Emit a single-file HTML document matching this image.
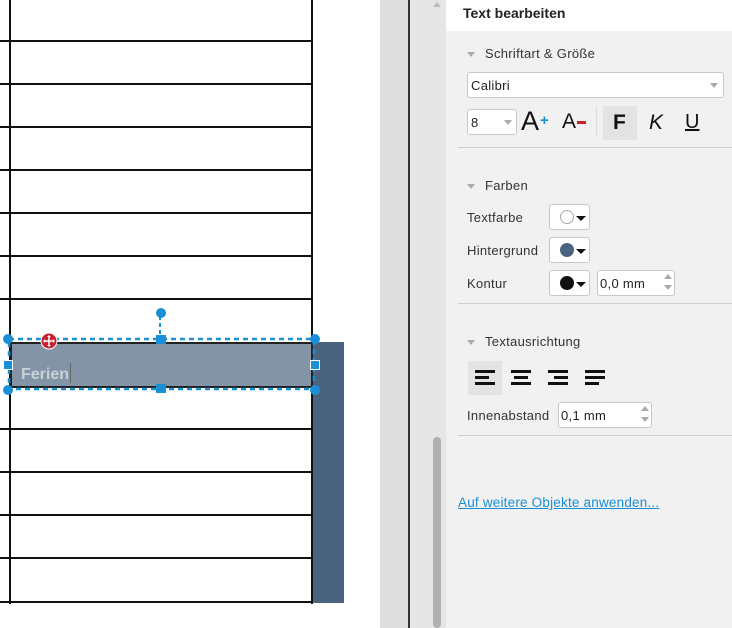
<!DOCTYPE html>
<html><head><meta charset="utf-8"><style>
*{margin:0;padding:0;box-sizing:border-box}
body{width:732px;height:628px;overflow:hidden;background:#fff;position:relative;font-family:"Liberation Sans","DejaVu Sans",sans-serif;font-size:13px;color:#222}
.a{position:absolute}
.h{position:absolute;left:0;width:313px;height:2px;background:#111}
.lbl{position:absolute;font-size:13px;color:#333;letter-spacing:0.3px}
.box{position:absolute;background:#fff;border:1px solid #c8c8c8;border-radius:3px}
.tri{position:absolute;width:0;height:0;border-left:4px solid transparent;border-right:4px solid transparent;border-top:5px solid #aaa}
.sep{position:absolute;left:458px;width:274px;height:1px;background:#cfcfcf}
.bar{position:absolute;height:3px;background:#111}
</style></head><body>
<!-- canvas -->
<div class="a" style="left:9px;top:0;width:2px;height:604px;background:#111"></div>
<div class="a" style="left:311px;top:0;width:2px;height:604px;background:#111"></div>
<div class="h" style="top:40px"></div><div class="h" style="top:83px"></div><div class="h" style="top:126px"></div><div class="h" style="top:169px"></div><div class="h" style="top:212px"></div><div class="h" style="top:255px"></div><div class="h" style="top:298px"></div>
<div class="h" style="top:428px"></div><div class="h" style="top:471px"></div><div class="h" style="top:514px"></div><div class="h" style="top:557px"></div><div class="h" style="top:601px"></div>
<div class="a" style="left:313px;top:342px;width:31px;height:261px;background:#4a6480"></div>
<div class="a" style="left:10px;top:342px;width:303px;height:46px;background:#8294a6;border:2px solid #222"></div>
<div class="a" style="left:21px;top:366px;font-weight:bold;font-size:16px;color:#c9d1d9">Ferien</div>
<div class="a" style="left:70px;top:363px;width:1px;height:20px;background:#666"></div>
<!-- selection -->
<svg class="a" style="left:0;top:300px" width="330" height="100">
<rect x="9" y="39" width="305" height="50" fill="none" stroke="#1a8fd6" stroke-width="2.5" stroke-dasharray="5,4"/>
<line x1="160" y1="16" x2="160" y2="38" stroke="#1a8fd6" stroke-width="2" stroke-dasharray="4,3"/>
</svg>
<div class="a" style="left:156px;top:308px;width:10px;height:10px;border-radius:50%;background:#1a8fd6"></div>
<div class="a" style="left:3px;top:334px;width:10px;height:10px;border-radius:50%;background:#1a8fd6"></div>
<div class="a" style="left:310px;top:334px;width:10px;height:10px;border-radius:50%;background:#1a8fd6"></div>
<div class="a" style="left:3px;top:385px;width:10px;height:10px;border-radius:50%;background:#1a8fd6"></div>
<div class="a" style="left:310px;top:385px;width:10px;height:10px;border-radius:50%;background:#1a8fd6"></div>
<div class="a" style="left:156px;top:335px;width:10px;height:9px;background:#1a8fd6"></div>
<div class="a" style="left:156px;top:384px;width:10px;height:9px;background:#1a8fd6"></div>
<div class="a" style="left:3px;top:360px;width:10px;height:10px;background:#1a8fd6;border:1px solid #fff"></div>
<div class="a" style="left:310px;top:360px;width:10px;height:10px;background:#1a8fd6;border:1px solid #fff"></div>
<svg class="a" style="left:40px;top:332px" width="18" height="18" viewBox="0 0 18 18"><circle cx="9" cy="9" r="8" fill="#c8202a" stroke="#fff" stroke-width="1"/><path d="M9 4v10M4 9h10" stroke="#fff" stroke-width="1.5"/><path d="M9 3l-2 2h4zM9 15l-2-2h4zM3 9l2-2v4zM15 9l-2-2v4z" fill="#fff"/></svg>
<!-- middle gutter -->
<div class="a" style="left:380px;top:0;width:29px;height:628px;background:#dedede"></div>
<div class="a" style="left:408px;top:0;width:2px;height:628px;background:#333"></div>
<div class="a" style="left:410px;top:0;width:36px;height:628px;background:#e6e6e6"></div>
<div class="a" style="left:433px;top:437px;width:8px;height:191px;border-radius:4px;background:#b0b0b0"></div>
<div class="a" style="left:433px;top:2px;width:0;height:0;border-left:4px solid transparent;border-right:4px solid transparent;border-bottom:5px solid #bbb"></div>
<!-- panel -->
<div class="a" style="left:446px;top:0;width:286px;height:628px;background:#f1f1f1"></div>
<div class="a" style="left:446px;top:0;width:286px;height:31px;background:#fff"></div>
<div class="a" style="left:463px;top:5px;font-weight:bold;font-size:14px;color:#222">Text bearbeiten</div>
<div class="tri" style="left:467px;top:52px"></div>
<div class="lbl" style="left:485px;top:46px">Schriftart &amp; Größe</div>
<div class="box" style="left:467px;top:72px;width:257px;height:26px"></div>
<div class="lbl" style="left:471px;top:78px;color:#222">Calibri</div>
<div class="tri" style="left:710px;top:83px"></div>
<div class="box" style="left:467px;top:109px;width:50px;height:26px"></div>
<div class="lbl" style="left:471px;top:115px;color:#222">8</div>
<div class="tri" style="left:504px;top:120px"></div>
<div class="a" style="left:521px;top:106px;font-size:27px;color:#111">A</div>
<div class="a" style="left:540px;top:112px;font-size:15px;font-weight:bold;color:#1a8fd6">+</div>
<div class="a" style="left:562px;top:110px;font-size:21px;color:#111">A</div>
<div class="a" style="left:577px;top:121px;width:9px;height:3px;background:#c8202a"></div>
<div class="a" style="left:596px;top:107px;width:1px;height:30px;background:#ddd"></div>
<div class="a" style="left:603px;top:106px;width:34px;height:34px;background:#e3e3e3"></div>
<div class="a" style="left:613px;top:111px;font-size:21px;font-weight:bold;color:#111">F</div>
<div class="a" style="left:649px;top:111px;font-size:21px;font-style:italic;color:#111">K</div>
<div class="a" style="left:685px;top:111px;font-size:20px;color:#111;text-decoration:underline">U</div>
<div class="sep" style="top:147px"></div>
<div class="tri" style="left:467px;top:184px"></div>
<div class="lbl" style="left:485px;top:178px">Farben</div>
<div class="lbl" style="left:467px;top:210px">Textfarbe</div>
<div class="box" style="left:549px;top:204px;width:41px;height:26px"></div>
<div class="a" style="left:560px;top:210px;width:14px;height:14px;border-radius:50%;border:1px solid #aaa;background:#fff"></div>
<div class="a" style="left:576px;top:216px;border-left:5px solid transparent;border-right:5px solid transparent;border-top:5px solid #111"></div>
<div class="lbl" style="left:467px;top:243px">Hintergrund</div>
<div class="box" style="left:549px;top:237px;width:41px;height:26px"></div>
<div class="a" style="left:560px;top:243px;width:14px;height:14px;border-radius:50%;background:#4a6480"></div>
<div class="a" style="left:576px;top:249px;border-left:5px solid transparent;border-right:5px solid transparent;border-top:5px solid #111"></div>
<div class="lbl" style="left:467px;top:276px">Kontur</div>
<div class="box" style="left:549px;top:270px;width:41px;height:26px"></div>
<div class="a" style="left:560px;top:276px;width:14px;height:14px;border-radius:50%;background:#111"></div>
<div class="a" style="left:576px;top:282px;border-left:5px solid transparent;border-right:5px solid transparent;border-top:5px solid #111"></div>
<div class="box" style="left:597px;top:270px;width:78px;height:26px"></div>
<div class="lbl" style="left:600px;top:276px;color:#222">0,0 mm</div>
<div class="a" style="left:664px;top:274px;border-left:4px solid transparent;border-right:4px solid transparent;border-bottom:5px solid #aaa"></div>
<div class="a" style="left:664px;top:285px;border-left:4px solid transparent;border-right:4px solid transparent;border-top:5px solid #aaa"></div>
<div class="sep" style="top:303px"></div>
<div class="tri" style="left:467px;top:340px"></div>
<div class="lbl" style="left:485px;top:334px">Textausrichtung</div>
<div class="a" style="left:468px;top:361px;width:34px;height:34px;background:#e3e3e3"></div>
<div class="bar" style="left:475px;top:370px;width:20px"></div><div class="bar" style="left:475px;top:376px;width:14px"></div><div class="bar" style="left:475px;top:382px;width:20px"></div>
<div class="bar" style="left:511px;top:370px;width:20px"></div><div class="bar" style="left:514px;top:376px;width:14px"></div><div class="bar" style="left:511px;top:382px;width:20px"></div>
<div class="bar" style="left:548px;top:370px;width:20px"></div><div class="bar" style="left:554px;top:376px;width:14px"></div><div class="bar" style="left:548px;top:382px;width:20px"></div>
<div class="bar" style="left:585px;top:370px;width:20px"></div><div class="bar" style="left:585px;top:376px;width:20px"></div><div class="bar" style="left:585px;top:382px;width:14px"></div>
<div class="lbl" style="left:467px;top:408px">Innenabstand</div>
<div class="box" style="left:558px;top:402px;width:94px;height:26px"></div>
<div class="lbl" style="left:561px;top:408px;color:#222">0,1 mm</div>
<div class="a" style="left:641px;top:406px;border-left:4px solid transparent;border-right:4px solid transparent;border-bottom:5px solid #aaa"></div>
<div class="a" style="left:641px;top:417px;border-left:4px solid transparent;border-right:4px solid transparent;border-top:5px solid #aaa"></div>
<div class="sep" style="top:435px"></div>
<div class="a" style="left:458px;top:495px;font-size:13.5px;letter-spacing:0.2px;color:#1a8fd6;text-decoration:underline">Auf weitere Objekte anwenden...</div>
</body></html>
